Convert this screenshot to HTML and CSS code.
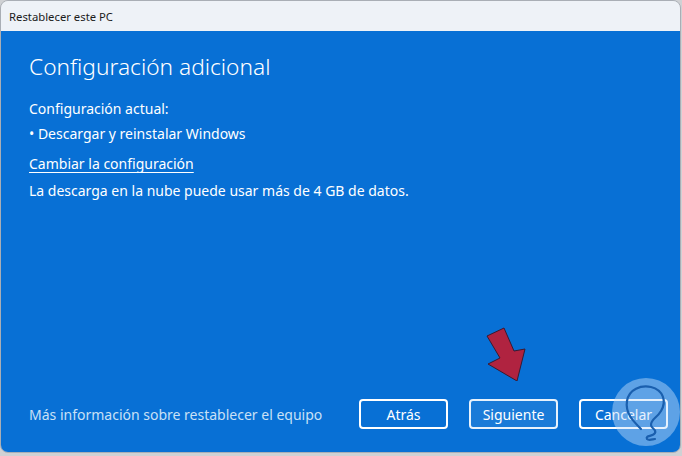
FILE: index.html
```html
<!DOCTYPE html>
<html lang="es">
<head>
  <meta charset="UTF-8">
  <title>Restablecer este PC</title>
  <link rel="stylesheet" href="styles.css">
</head>
<body>
  <div class="window">
    <!-- Title bar -->
    <header class="title-bar">Restablecer este PC</header>

    <!-- Dialog body -->
    <main class="dialog">
      <h1>Configuración adicional</h1>
      <p class="line">Configuración actual:</p>
      <p class="line">• Descargar y reinstalar Windows</p>
      <a class="link" href="#">Cambiar la configuración</a>
      <p class="line">La descarga en la nube puede usar más de 4 GB de datos.</p>

      <footer class="footer">
        <a class="more" href="#">Más información sobre restablecer el equipo</a>
        <div class="actions">
          <button class="btn">Atrás</button>
          <button class="btn btn-focus">Siguiente</button>
          <button class="btn">Cancelar</button>
        </div>
      </footer>
    </main>

    <!-- Pointer arrow overlay -->
    <svg class="arrow" width="50" height="60" viewBox="0 0 50 60">
      <polygon points="6,15 23,7 33,30 44,28 36,60 7,43 19,37" fill="#b02340" stroke="#3a1a30" stroke-width="1" stroke-linejoin="round"/>
    </svg>

    <!-- Watermark -->
    <svg class="mark" width="70" height="70" viewBox="0 0 70 70">
      <circle cx="35" cy="35" r="34" fill="rgba(200,225,250,0.45)"/>
      <path d="M30 52 C22 44 14 36 16 24 C18 12 30 8 40 10 C52 13 56 24 50 34 C46 41 40 42 40 48 C40 52 46 52 44 56 C42 60 34 58 36 62 C38 64 42 62 44 62" fill="none" stroke="#1a5fae" stroke-width="2.2" stroke-linecap="round"/>
    </svg>
  </div>
</body>
</html>
```

FILE: styles.css
```css
/* --- Vars and reset --- */
:root {
  --blue: #0870d5;
  --title-bg: #eef2f7;
  --font: 'Noto Sans', 'Open Sans', sans-serif;
}
* { box-sizing: border-box; margin: 0; padding: 0; }
body { font-family: var(--font); background: #cfd1d4; width: 682px; height: 456px; overflow: hidden; }

/* --- Window --- */
.window {
  position: relative;
  width: 681px;
  height: 453px;
  border-radius: 8px;
  overflow: hidden;
  border: 1px solid #a9aeb5;
  display: flex;
  flex-direction: column;
}
.title-bar {
  height: 30px;
  background: var(--title-bg);
  color: #1b1b1b;
  font-size: 11.3px;
  padding: 8px 0 0 8px;
}

/* --- Dialog body --- */
.dialog {
  flex: 1;
  background: var(--blue);
  color: #fff;
  padding: 20px 12px 23px 28px;
  display: flex;
  flex-direction: column;
}
.dialog h1 { font-size: 22.7px; font-weight: 300; line-height: 32px; margin-bottom: 13px; }
.line { font-size: 14px; line-height: 25px; }
.link { color: #fff; font-size: 14px; line-height: 26px; text-decoration: underline; text-underline-offset: 3px; margin-top: 5px; align-self: flex-start; }
.dialog .link + .line { margin-top: 1px; }

/* --- Footer --- */
.footer { margin-top: auto; display: flex; align-items: center; justify-content: space-between; }
.more { color: #c9e0f6; font-size: 14px; text-decoration: none; }
.actions { display: flex; gap: 21px; }
.btn {
  width: 89px;
  height: 30px;
  border: 2px solid #fff;
  border-radius: 4px;
  background: transparent;
  color: #fff;
  font-family: var(--font);
  font-size: 14px;
}
.btn-focus { background: #1a7bd8; border-color: #e8f2fc; }

/* --- Overlays --- */
.arrow { position: absolute; left: 480px; top: 320px; }
.mark { position: absolute; left: 610px; top: 376px; }
```
